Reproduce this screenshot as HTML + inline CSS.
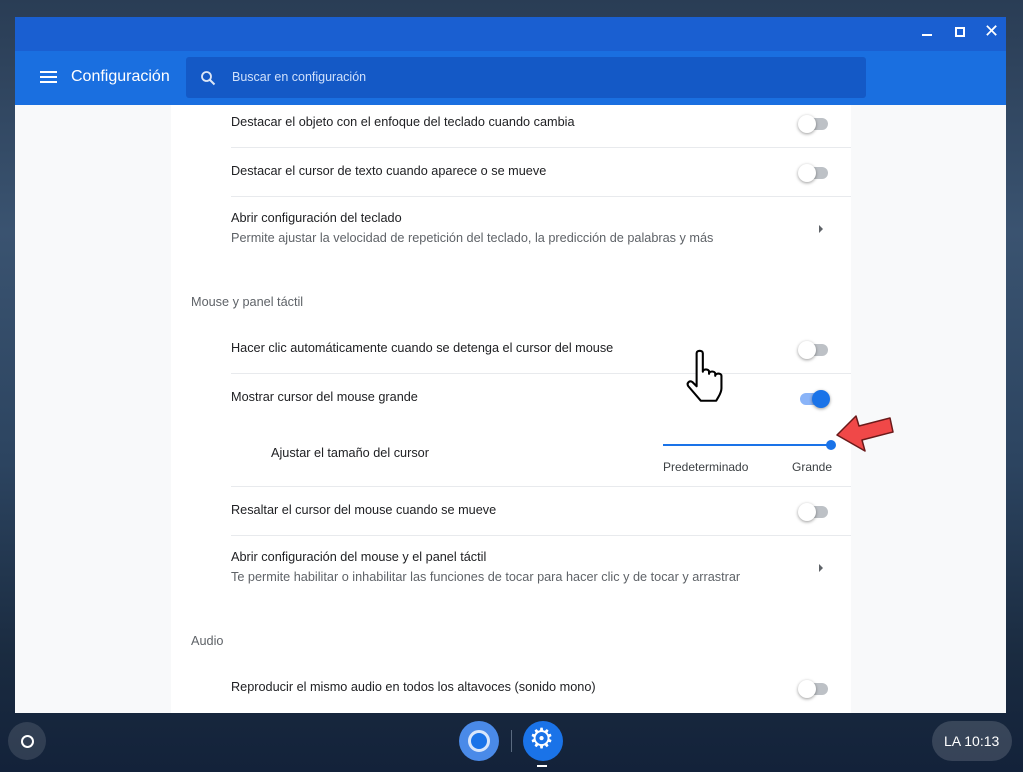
<!DOCTYPE html>
<html><head><meta charset="utf-8"><style>
*{margin:0;padding:0;box-sizing:border-box}
body{width:1023px;height:772px;overflow:hidden;position:relative;font-family:"Liberation Sans",sans-serif;background:linear-gradient(180deg,#2a3d55 0%,#3a5370 30%,#2c4460 60%,#1a2b40 85%,#13223a 100%);}
.win{position:absolute;left:15px;top:17px;width:991px;height:696px;background:#f8f9fa;overflow:hidden}
.title{position:absolute;left:0;top:0;width:991px;height:34px;background:#1a5fd1}
.hdr{position:absolute;left:0;top:34px;width:991px;height:54px;background:#1a6fe0}
.search{position:absolute;left:171px;top:40px;width:680px;height:41px;background:#1459c6;border-radius:3px}
.card{position:absolute;left:156px;top:88px;width:680px;height:620px;background:#fff}
.t{position:absolute;font-size:12.7px;color:#202124;white-space:nowrap}
.s{position:absolute;font-size:12.7px;color:#5f6368;white-space:nowrap}
.h{position:absolute;font-size:12.7px;color:#5f6368;font-weight:500}
.sep{position:absolute;left:60px;width:620px;height:1px;background:#e8eaed}
.tg{position:absolute;width:28px;height:12px;border-radius:6px;background:#bdc1c6}
.tg::after{content:"";position:absolute;left:-2px;top:-3px;width:18px;height:18px;border-radius:50%;background:#fff;box-shadow:0 1px 3px rgba(0,0,0,.4)}
.tg.on{background:#8ab4f8}
.tg.on::after{left:12px;background:#1a73e8}
.ar{position:absolute;width:0;height:0;border-top:4px solid transparent;border-bottom:4px solid transparent;border-left:4px solid #5f6368}
</style></head><body>
<div class="win">
<div class="title">
<div style="position:absolute;left:907px;top:17px;width:10px;height:2px;background:#fff"></div>
<div style="position:absolute;left:940px;top:10px;width:10px;height:10px;border:2px solid #fff"></div>
<div style="position:absolute;left:969px;top:4px;color:#fff;font-size:18px">✕</div>
</div>
<div class="hdr">
<div style="position:absolute;left:25px;top:20px;width:17px;height:2px;background:#fff;box-shadow:0 5px 0 #fff,0 10px 0 #fff"></div>
<div style="position:absolute;left:56px;top:17px;color:#fff;font-size:16px">Configuración</div>
</div>
<div class="search">
<svg style="position:absolute;left:14px;top:13px" width="16" height="16" viewBox="0 0 16 16"><circle cx="6.5" cy="6.5" r="4.5" fill="none" stroke="#fff" stroke-width="1.8" opacity=".85"/><path d="M10 10l4.5 4.5" stroke="#fff" stroke-width="2" opacity=".85"/></svg>
<div style="position:absolute;left:46px;top:13px;color:#cfe0fb;font-size:12.5px">Buscar en configuración</div>
</div>
<div class="card">
<div class="t" style="left:60px;top:10px">Destacar el objeto con el enfoque del teclado cuando cambia</div>
<div class="tg" style="left:629px;top:13px"></div>
<div class="sep" style="top:42px"></div>
<div class="t" style="left:60px;top:59px">Destacar el cursor de texto cuando aparece o se mueve</div>
<div class="tg" style="left:629px;top:62px"></div>
<div class="sep" style="top:91px"></div>
<div class="t" style="left:60px;top:106px">Abrir configuración del teclado</div>
<div class="s" style="left:60px;top:126px">Permite ajustar la velocidad de repetición del teclado, la predicción de palabras y más</div>
<div class="ar" style="left:648px;top:120px"></div>
<div class="h" style="left:20px;top:190px">Mouse y panel táctil</div>
<div class="t" style="left:60px;top:236px">Hacer clic automáticamente cuando se detenga el cursor del mouse</div>
<div class="tg" style="left:629px;top:239px"></div>
<div class="sep" style="top:268px"></div>
<div class="t" style="left:60px;top:285px">Mostrar cursor del mouse grande</div>
<div class="tg on" style="left:629px;top:288px"></div>
<div class="t" style="left:100px;top:341px">Ajustar el tamaño del cursor</div>
<div style="position:absolute;left:492px;top:339px;width:168px;height:2px;background:#1a73e8"></div>
<div style="position:absolute;left:655px;top:335px;width:10px;height:10px;border-radius:50%;background:#1a73e8"></div>
<div class="t" style="left:492px;top:355px;font-size:12px;color:#3c4043">Predeterminado</div>
<div class="t" style="left:621px;top:355px;font-size:12px;color:#3c4043">Grande</div>
<div class="sep" style="top:381px"></div>
<div class="t" style="left:60px;top:398px">Resaltar el cursor del mouse cuando se mueve</div>
<div class="tg" style="left:629px;top:401px"></div>
<div class="sep" style="top:430px"></div>
<div class="t" style="left:60px;top:445px">Abrir configuración del mouse y el panel táctil</div>
<div class="s" style="left:60px;top:465px">Te permite habilitar o inhabilitar las funciones de tocar para hacer clic y de tocar y arrastrar</div>
<div class="ar" style="left:648px;top:459px"></div>
<div class="h" style="left:20px;top:529px">Audio</div>
<div class="t" style="left:60px;top:575px">Reproducir el mismo audio en todos los altavoces (sonido mono)</div>
<div class="tg" style="left:629px;top:578px"></div>
</div>
</div>
<!-- hand cursor -->
<svg style="position:absolute;left:678px;top:348px" width="60" height="62" viewBox="0 0 58 58"><path d="M18 4c0-3 6-3 6 0v18c0-3 6-3 6 0v2c0-3 6-3 6 0v2c0-3 6-3 6 0v12c0 5-3 8-5 12H22l-12-14c-2-3 1-6 4-4l4 4z" fill="#fff" stroke="#000" stroke-width="2" stroke-linejoin="round"/></svg>
<!-- red arrow -->
<svg style="position:absolute;left:834px;top:413px" width="62" height="42" viewBox="0 0 62 42"><path d="M3 22L22 3l3 10 31-8 3 14-31 8 3 11z" fill="#f04848" stroke="#6a1a1a" stroke-width="1.5" stroke-linejoin="round"/></svg>
<!-- shelf -->
<div style="position:absolute;left:8px;top:722px;width:38px;height:38px;border-radius:50%;background:rgba(255,255,255,.12)"></div>
<div style="position:absolute;left:21px;top:735px;width:13px;height:13px;border:2px solid #fff;border-radius:50%"></div>
<div style="position:absolute;left:459px;top:721px;width:40px;height:40px;border-radius:50%;background:#4a8ae8"></div>
<div style="position:absolute;left:468px;top:730px;width:22px;height:22px;border-radius:50%;background:#1a73e8;border:3px solid #d8e6fb"></div>
<div style="position:absolute;left:511px;top:730px;width:1px;height:22px;background:#5a6a80"></div>
<div style="position:absolute;left:523px;top:721px;width:40px;height:40px;border-radius:50%;background:#1a73e8"></div>
<div style="position:absolute;left:529px;top:722px;color:#fff;font-size:28px">⚙</div>
<div style="position:absolute;left:537px;top:765px;width:10px;height:2px;background:#fff"></div>
<div style="position:absolute;left:932px;top:721px;width:80px;height:40px;border-radius:20px;background:rgba(255,255,255,.15)"></div>
<div style="position:absolute;left:944px;top:733px;color:#fff;font-size:14px">LA 10:13</div>
</body></html>
